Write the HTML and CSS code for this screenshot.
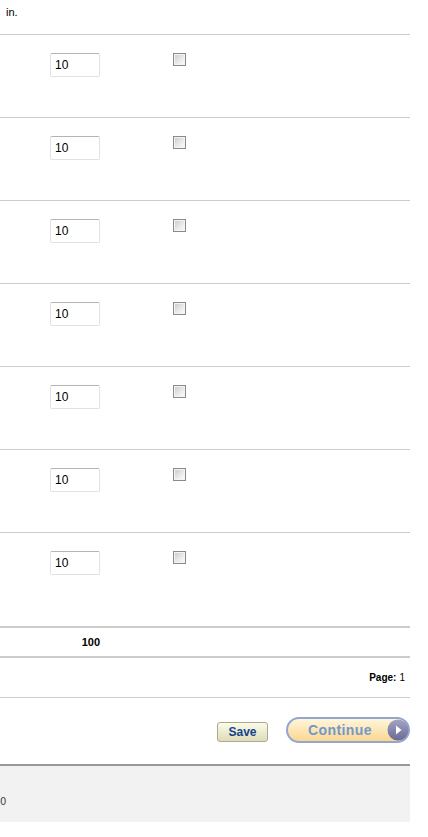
FILE: index.html
```html
<!DOCTYPE html>
<html lang="en">

<head>
    <meta charset="UTF-8">
    <meta name="viewport" content="width=device-width, initial-scale=1.0">
    <title>Quantities</title>
    <link rel="stylesheet" href="styles.css">
</head>

<body>
    <div class="page">
        <div class="intro">in.</div>

        <form class="items">
            <div class="item-row">
                <div class="qty-cell"><input class="qty" type="text" value="10"></div>
                <div class="check-cell"><input class="check" type="checkbox"></div>
            </div>
            <div class="item-row">
                <div class="qty-cell"><input class="qty" type="text" value="10"></div>
                <div class="check-cell"><input class="check" type="checkbox"></div>
            </div>
            <div class="item-row">
                <div class="qty-cell"><input class="qty" type="text" value="10"></div>
                <div class="check-cell"><input class="check" type="checkbox"></div>
            </div>
            <div class="item-row">
                <div class="qty-cell"><input class="qty" type="text" value="10"></div>
                <div class="check-cell"><input class="check" type="checkbox"></div>
            </div>
            <div class="item-row">
                <div class="qty-cell"><input class="qty" type="text" value="10"></div>
                <div class="check-cell"><input class="check" type="checkbox"></div>
            </div>
            <div class="item-row">
                <div class="qty-cell"><input class="qty" type="text" value="10"></div>
                <div class="check-cell"><input class="check" type="checkbox"></div>
            </div>
            <div class="item-row last">
                <div class="qty-cell"><input class="qty" type="text" value="10"></div>
                <div class="check-cell"><input class="check" type="checkbox"></div>
            </div>

            <div class="total-row">
                <span class="total">100</span>
            </div>

            <div class="pager-row">
                <b>Page:</b> 1
            </div>

            <div class="actions">
                <button class="btn-save" type="button">Save</button>
                <button class="btn-continue" type="submit">
                    Continue
                    <svg class="arrow" width="22" height="22" viewBox="0 0 22 22">
                        <defs>
                            <linearGradient id="ball" x1="0" y1="0" x2="0" y2="1">
                                <stop offset="0" stop-color="#a4a4c4" />
                                <stop offset="1" stop-color="#6a6a94" />
                            </linearGradient>
                        </defs>
                        <circle cx="11" cy="11" r="10.5" fill="url(#ball)" />
                        <path d="M9 6.5 L14.5 11 L9 15.5 Z" fill="#fff" />
                    </svg>
                </button>
            </div>
        </form>

        <div class="footer">0</div>
    </div>
</body>

</html>
```

FILE: styles.css
```css
body {
    margin: 0;
    font-family: "Liberation Sans", Arial, sans-serif;
    font-size: 11px;
    color: #000;
    background-color: #fff;
}

.page {
    width: 410px;
}

.intro {
    height: 35px;
    padding: 6px 0 0 6px;
    box-sizing: border-box;
    border-bottom: 1px solid #ccc;
}

.item-row {
    display: flex;
    height: 82px;
    border-bottom: 1px solid #ccc;
}

.item-row.last {
    height: 93px;
    border-bottom: 2px solid #ccc;
}

.qty-cell {
    width: 173px;
    padding: 18px 0 0 50px;
    box-sizing: border-box;
}

.qty {
    width: 50px;
    height: 24px;
    padding: 0 4px;
    box-sizing: border-box;
    border: 1px solid #e2e2e2;
    border-top-color: #b4b4b4;
    border-radius: 2px;
    font-family: "Liberation Sans", Arial, sans-serif;
    font-size: 12px;
    color: #000;
    outline: none;
}

.check-cell {
    padding-top: 18px;
}

.check {
    appearance: none;
    -webkit-appearance: none;
    margin: 0;
    width: 13px;
    height: 13px;
    box-sizing: border-box;
    border: 1px solid #8a8a8a;
    box-shadow: inset 0 0 0 1px #f4f4f4;
    background: linear-gradient(135deg, #c8c8c8 0%, #ececec 60%, #fdfdfd 100%);
}

.total-row {
    height: 28px;
    display: flex;
    align-items: center;
    border-bottom: 2px solid #ccc;
}

.total {
    width: 100px;
    text-align: right;
    font-weight: bold;
}

.pager-row {
    height: 40px;
    padding-right: 5px;
    box-sizing: border-box;
    display: flex;
    align-items: center;
    justify-content: flex-end;
    gap: 3px;
    font-size: 10px;
    border-bottom: 1px solid #ccc;
}

.actions {
    height: 66px;
    display: flex;
    align-items: flex-start;
    justify-content: flex-end;
    gap: 18px;
    padding-top: 19px;
    box-sizing: border-box;
}

.btn-save {
    margin-top: 5px;
    width: 51px;
    height: 20px;
    padding: 0;
    border: 1px solid #a9a98c;
    border-radius: 3px;
    background: linear-gradient(#fbfbea, #dedcb8);
    font-family: "Liberation Sans", Arial, sans-serif;
    font-size: 12px;
    font-weight: bold;
    color: #14418a;
    cursor: pointer;
}

.btn-continue {
    width: 124px;
    height: 26px;
    padding: 0 0 0 20px;
    display: flex;
    align-items: center;
    justify-content: space-between;
    border: 2px solid #92a6d2;
    border-radius: 13px;
    background: linear-gradient(#fff6dc, #fbd690);
    font-family: "Liberation Sans", Arial, sans-serif;
    font-size: 14px;
    font-weight: bold;
    letter-spacing: 0.4px;
    color: #7397ca;
    box-sizing: border-box;
    cursor: pointer;
}

.arrow {
    display: block;
    margin-right: -1px;
}

.footer {
    height: 58px;
    border-top: 2px solid #999;
    background-color: #f2f2f2;
    color: #444;
    font-family: "DejaVu Sans", sans-serif;
    font-size: 10px;
    padding-top: 30px;
    box-sizing: border-box;
}
```
